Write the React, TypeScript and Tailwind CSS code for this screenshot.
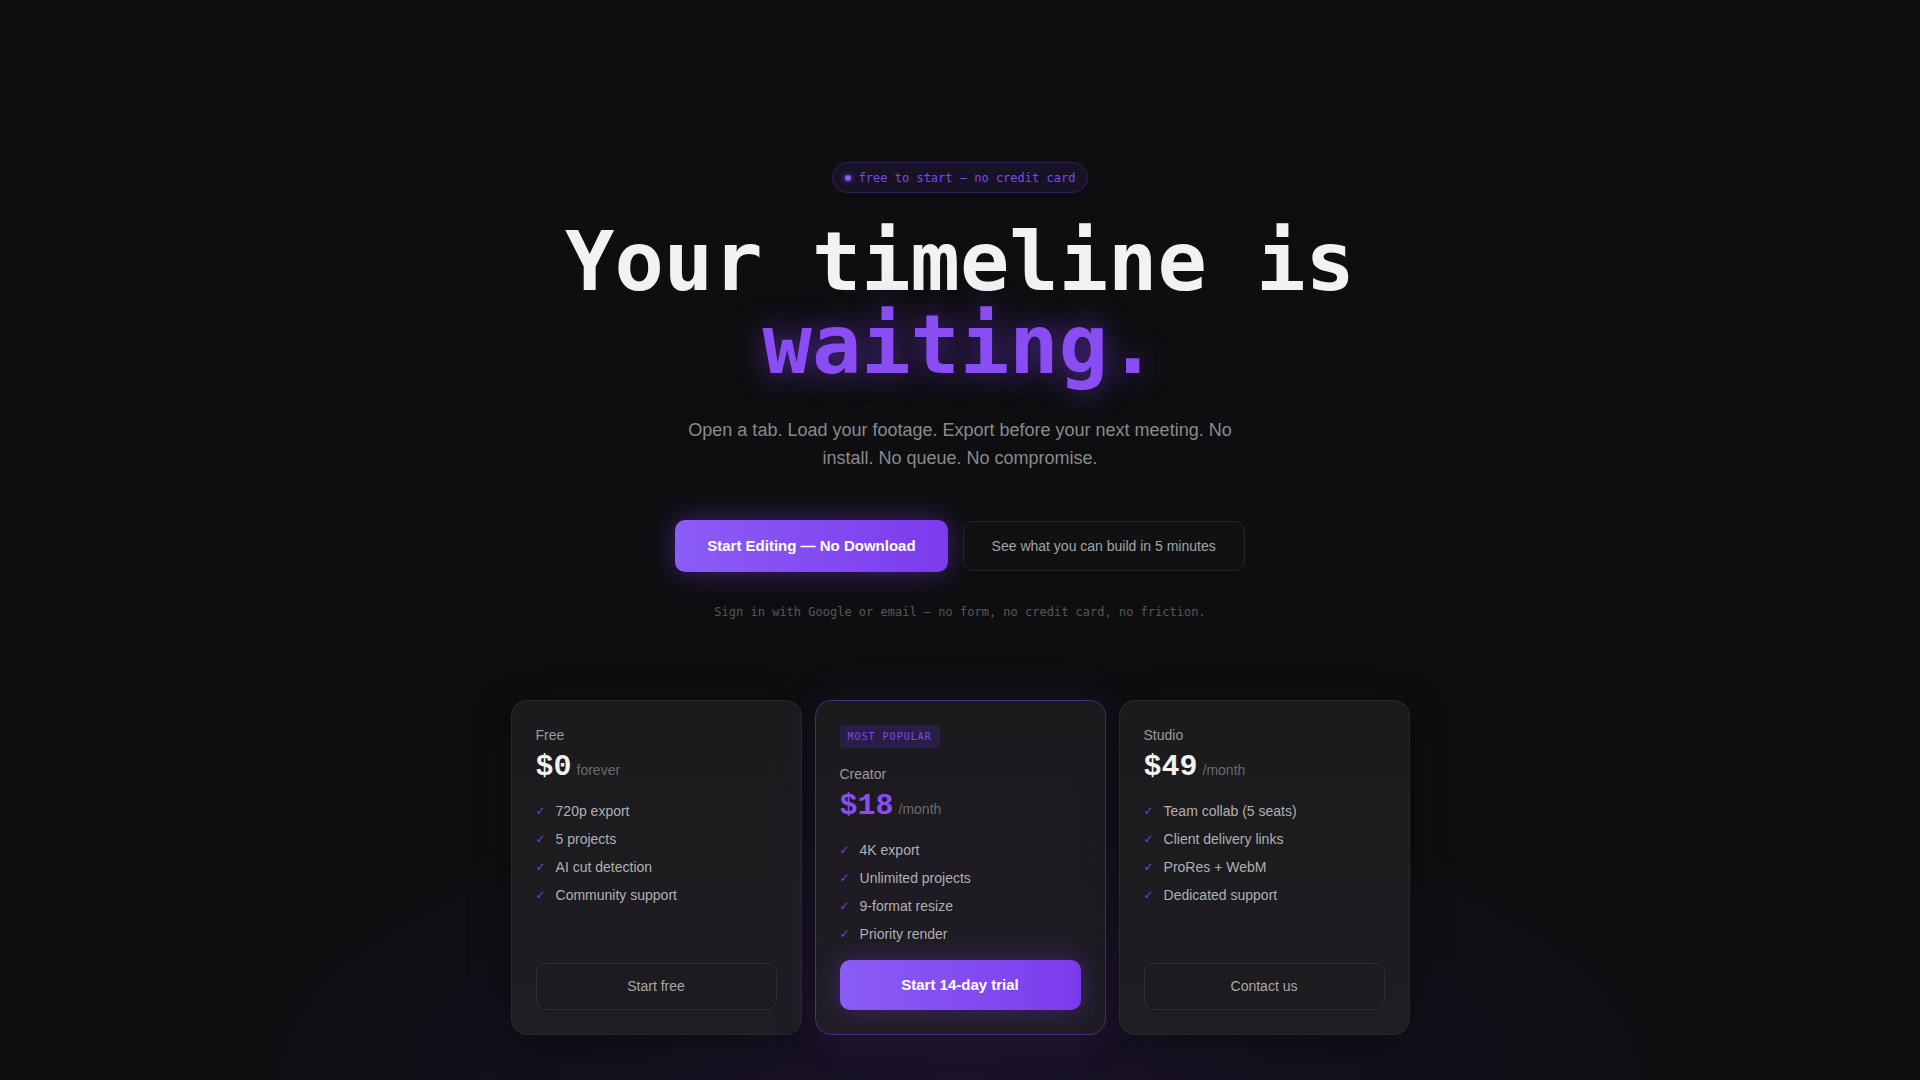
import React from "react";

const mono = "font-['DejaVu_Sans_Mono',monospace]";
const priceMono = "font-['Liberation_Mono','DejaVu_Sans_Mono',monospace]";

type Plan = {
  name: string;
  price: string;
  suffix: string;
  features: string[];
  cta: string;
  featured?: boolean;
};

const plans: Plan[] = [
  {
    name: "Free",
    price: "$0",
    suffix: "forever",
    features: ["720p export", "5 projects", "AI cut detection", "Community support"],
    cta: "Start free",
  },
  {
    name: "Creator",
    price: "$18",
    suffix: "/month",
    features: ["4K export", "Unlimited projects", "9-format resize", "Priority render"],
    cta: "Start 14-day trial",
    featured: true,
  },
  {
    name: "Studio",
    price: "$49",
    suffix: "/month",
    features: ["Team collab (5 seats)", "Client delivery links", "ProRes + WebM", "Dedicated support"],
    cta: "Contact us",
  },
];

function Card({ plan }: { plan: Plan }) {
  return (
    <div
      className={
        plan.featured
          ? "flex flex-col rounded-[16px] border border-[#46307c] bg-gradient-to-b from-[#1b1a1d] to-[#201d26] p-6 shadow-[0_0_50px_rgba(124,58,237,0.10)]"
          : "flex flex-col rounded-[16px] border border-[#2a2a2d] bg-gradient-to-b from-[#1b1b1d] to-[#1e1d22] p-6 shadow-[0_10px_40px_rgba(0,0,0,0.35)]"
      }
    >
      {plan.featured && (
        <div
          className={`${mono} mb-4 self-start rounded-[4px] bg-[#2a1e48] px-2 py-1 text-[10px] leading-[15px] tracking-[0.1em] text-[#7c4ae8]`}
        >
          MOST POPULAR
        </div>
      )}
      <div className="text-[14px] leading-5 text-[#9a9a9a]">{plan.name}</div>
      <div className="mt-[5px] flex items-baseline gap-[5px]">
        <span
          className={`${priceMono} text-[30px] font-bold leading-[34px] ${
            plan.featured ? "text-[#8a4df4]" : "text-[#f2f2f2]"
          }`}
        >
          {plan.price}
        </span>
        <span className="text-[14px] leading-5 text-[#6a6a6d]">{plan.suffix}</span>
      </div>
      <ul className="mt-[17px] flex flex-col gap-2">
        {plan.features.map((f) => (
          <li key={f} className="flex items-center gap-[10px] text-[14px] leading-5 text-[#b0b0b3]">
            <span className="font-['DejaVu_Sans',sans-serif] text-[12px] font-bold text-[#7c3aed]">✓</span>
            <span>{f}</span>
          </li>
        ))}
      </ul>
      <div className="mt-auto pt-4">
        {plan.featured ? (
          <button className="flex h-[50px] w-full items-center justify-center rounded-[10px] bg-gradient-to-r from-[#8b5cf6] to-[#7c3aed] text-[15px] font-bold text-white shadow-[0_0_24px_rgba(124,58,237,0.35)]">
            {plan.cta}
          </button>
        ) : (
          <button className="flex h-[47px] w-full items-center justify-center rounded-[10px] border border-[#2f2e33] bg-[#1c1b1f] text-[14px] text-[#a8a8ab]">
            {plan.cta}
          </button>
        )}
      </div>
    </div>
  );
}

export default function App() {
  return (
    <div className="min-h-screen w-full overflow-hidden bg-[#0e0e10] bg-[image:radial-gradient(ellipse_1000px_400px_at_50%_100%,rgba(110,50,210,0.13),transparent_75%)] font-['Liberation_Sans',Arial,sans-serif]">
      <div className="flex flex-col items-center pt-[162px] pb-[45px]">
        <div
          className={`${mono} flex h-[31px] items-center gap-2 rounded-full border border-[#33215c] bg-[#171226] pl-[12px] pr-[12px] text-[12px] text-[#7c4ae8]`}
        >
          <span className="h-[6px] w-[6px] rounded-full bg-[#8b5cf6] shadow-[0_0_6px_rgba(139,92,246,0.9)]" />
          <span>free to start — no credit card</span>
        </div>

        <h1 className={`${mono} mt-[27px] text-center text-[82px] font-bold leading-[83px] text-[#f2f2f2]`}>
          <div className="h-[83px]">Your timeline is</div>
          <div className="h-[83px] text-[#8a4df4] [text-shadow:0_0_30px_rgba(124,58,237,0.65)]">waiting.</div>
        </h1>

        <p className="mt-[30px] max-w-[560px] text-center text-[18px] leading-[28px] text-[#8a8a8d]">
          Open a tab. Load your footage. Export before your next meeting. No install. No queue. No
          compromise.
        </p>

        <div className="mt-[48px] flex items-center gap-[15px]">
          <button className="flex h-[52px] items-center rounded-[10px] bg-gradient-to-r from-[#8b5cf6] to-[#7c3aed] px-8 text-[15px] font-bold text-white shadow-[0_0_28px_rgba(124,58,237,0.45)]">
            Start Editing — No Download
          </button>
          <button className="flex h-[50px] items-center rounded-[10px] border border-[#262629] bg-[#111113] px-7 text-[14px] text-[#a3a3a6]">
            See what you can build in 5 minutes
          </button>
        </div>

        <div className={`${mono} mt-[32px] text-[12px] leading-4 text-[#57575b]`}>
          Sign in with Google or email — no form, no credit card, no friction.
        </div>

        <div className="mt-[80px] grid w-[899px] grid-cols-3 gap-[13px]">
          {plans.map((p) => (
            <Card key={p.name} plan={p} />
          ))}
        </div>
      </div>
    </div>
  );
}
